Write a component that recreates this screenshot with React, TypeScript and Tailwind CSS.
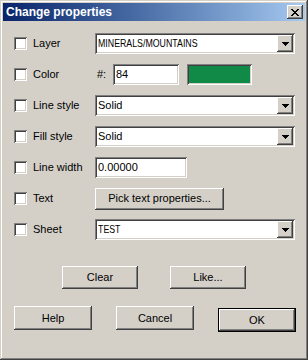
import React from "react";

const raised =
  "shadow-[inset_-1px_-1px_#404040,inset_1px_1px_#ffffff,inset_-2px_-2px_#808080,inset_2px_2px_#d4d0c8]";
const sunken =
  "shadow-[inset_1px_1px_#808080,inset_-1px_-1px_#ffffff,inset_2px_2px_#404040,inset_-2px_-2px_#d4d0c8]";

function Check() {
  return <div className={`w-[13px] h-[13px] bg-white shrink-0 ${sunken}`} />;
}

function Arrow() {
  return (
    <svg width="7" height="4" viewBox="0 0 7 4" shapeRendering="crispEdges">
      <rect x="0" y="0" width="7" height="1" fill="#000" />
      <rect x="1" y="1" width="5" height="1" fill="#000" />
      <rect x="2" y="2" width="3" height="1" fill="#000" />
      <rect x="3" y="3" width="1" height="1" fill="#000" />
    </svg>
  );
}

function Select({ value, narrow = false }: { value: string; narrow?: boolean }) {
  return (
    <div className={`w-[200px] h-[21px] bg-white flex items-center p-[2px] ${sunken}`}>
      <div className="flex-1 pl-[1px] leading-none">
        <span className={narrow ? "inline-block origin-left scale-x-[0.8]" : ""}>{value}</span>
      </div>
      <div className={`w-[16px] h-[17px] bg-[#d4d0c8] flex items-center justify-center ${raised}`}>
        <Arrow />
      </div>
    </div>
  );
}

function Row({ label, children }: { label: string; children: React.ReactNode }) {
  return (
    <div className="h-[21px] flex items-center">
      <Check />
      <span className="ml-[6px] w-[62px] leading-none">{label}</span>
      {children}
    </div>
  );
}

function Btn({ children, w, className = "" }: { children: React.ReactNode; w: string; className?: string }) {
  return (
    <div className={`${w} bg-[#d4d0c8] flex items-center justify-center ${raised} ${className}`}>
      <span className="leading-none">{children}</span>
    </div>
  );
}

export default function App() {
  return (
    <div
      className="w-[308px] h-[360px] bg-[#d4d0c8] p-[3px] flex flex-col text-[11px] text-black font-['Liberation_Sans',Arial,sans-serif] shadow-[inset_-1px_-1px_#404040,inset_1px_1px_#d4d0c8,inset_-2px_-2px_#808080,inset_2px_2px_#ffffff]"
    >
      <div className="h-[18px] flex items-center justify-between pl-[3px] pr-[2px] bg-linear-to-r from-[#0a246a] to-[#a6caf0]">
        <span className="font-bold text-white text-[12px] leading-none">Change properties</span>
        <div className={`w-[16px] h-[14px] bg-[#d4d0c8] flex items-center justify-center ${raised}`}>
          <svg width="8" height="7" viewBox="0 0 8 7" shapeRendering="crispEdges">
            <path
              d="M0 0h2v1h-2zM6 0h2v1h-2zM1 1h2v1h-2zM5 1h2v1h-2zM2 2h4v1h-4zM3 3h2v1h-2zM2 4h4v1h-4zM1 5h2v1h-2zM5 5h2v1h-2zM0 6h2v1h-2zM6 6h2v1h-2z"
              fill="#000"
            />
          </svg>
        </div>
      </div>

      <div className="flex flex-col pl-[11px] pt-[12px] gap-[10px]">
        <Row label="Layer">
          <Select value="MINERALS/MOUNTAINS" narrow />
        </Row>
        <Row label="Color">
          <span className="w-[18px] pl-[2px] leading-none">#:</span>
          <div className={`w-[66px] h-[21px] bg-white flex items-center pl-[3px] ${sunken}`}>
            <span className="leading-none">84</span>
          </div>
          <div className={`ml-[8px] w-[65px] h-[21px] bg-[#108a46] ${sunken}`} />
        </Row>
        <Row label="Line style">
          <Select value="Solid" />
        </Row>
        <Row label="Fill style">
          <Select value="Solid" />
        </Row>
        <Row label="Line width">
          <div className={`w-[92px] h-[21px] bg-white flex items-center pl-[3px] ${sunken}`}>
            <span className="leading-none">0.00000</span>
          </div>
        </Row>
        <Row label="Text">
          <Btn w="w-[129px] h-[22px]">Pick text properties...</Btn>
        </Row>
        <Row label="Sheet">
          <Select value="TEST" narrow />
        </Row>
      </div>

      <div className="flex pl-[59px] mt-[26px] gap-[32px]">
        <Btn w="w-[76px] h-[23px]">Clear</Btn>
        <Btn w="w-[76px] h-[23px]">Like...</Btn>
      </div>

      <div className="flex items-start pl-[11px] mt-[17px] gap-[24px]">
        <Btn w="w-[78px] h-[24px]">Help</Btn>
        <Btn w="w-[78px] h-[24px]">Cancel</Btn>
        <div className="mt-[2px] border border-black">
          <Btn w="w-[76px] h-[22px]">OK</Btn>
        </div>
      </div>
    </div>
  );
}
